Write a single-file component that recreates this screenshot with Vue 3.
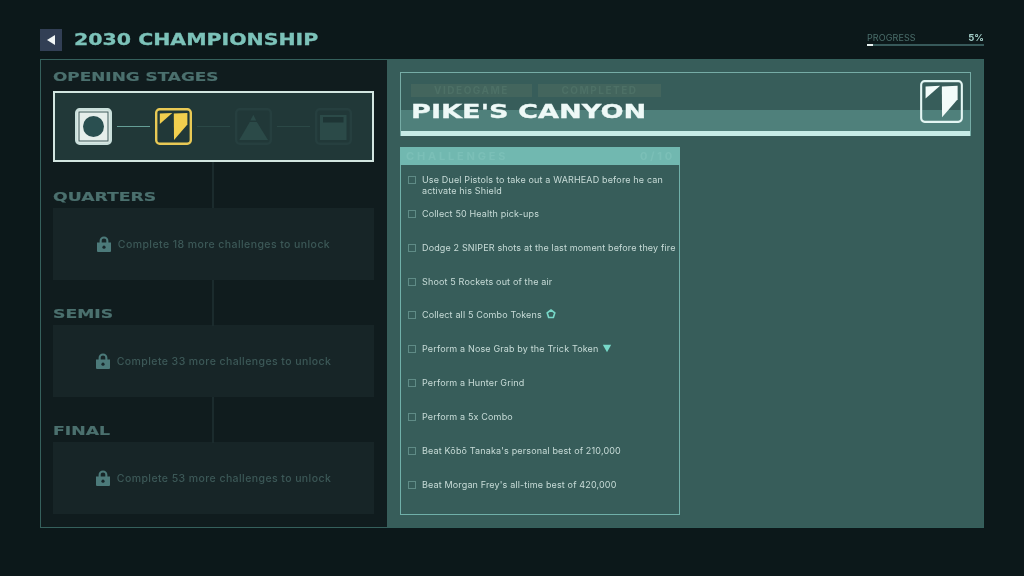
<template>
  <div class="screen">
    <header class="top-bar">
      <button class="back-btn"><span class="back-arrow"></span></button>
      <h1 class="page-title"><span>2030 CHAMPIONSHIP</span></h1>
      <div class="progress">
        <div class="progress-labels">
          <span class="progress-label">PROGRESS</span>
          <span class="progress-value">5%</span>
        </div>
        <div class="progress-track"><div class="progress-fill" :style="{ width: progress + '%' }"></div></div>
      </div>
    </header>

    <main class="frame">
      <section class="left-panel">
        <h2 class="stage-title first"><span>OPENING STAGES</span></h2>
        <div class="stage-box">
          <svg class="stage-icon" viewBox="0 0 37 37">
            <rect x="1.2" y="1.2" width="34.6" height="34.6" rx="3.5" fill="#e6eeeb" stroke="#c9dfdb" stroke-width="2.4" />
            <rect x="4" y="4" width="29" height="29" fill="none" stroke="#3c5a5a" stroke-width="1" />
            <circle cx="18.5" cy="18.5" r="10.5" fill="#2a4f50" />
          </svg>
          <span class="link"></span>
          <svg class="stage-icon" viewBox="0 0 37 37">
            <rect x="1.2" y="1.2" width="34.6" height="34.6" rx="3.5" fill="#213838" stroke="#e9c955" stroke-width="2.4" />
            <polygon :points="glyphLeft" fill="#f2cf4e" />
            <polygon :points="glyphRight" fill="#f2cf4e" />
          </svg>
          <span class="link dim"></span>
          <svg class="stage-icon" viewBox="0 0 37 37">
            <rect x="1.2" y="1.2" width="34.6" height="34.6" rx="3.5" fill="none" stroke="#263f3f" stroke-width="2.4" />
            <polygon points="18.3,6.7 21.2,12.5 15.4,12.5" fill="#2b4a48" />
            <polygon points="14.8,14 21.8,14 33,32 4.3,32" fill="#2b4a48" />
          </svg>
          <span class="link dim"></span>
          <svg class="stage-icon" viewBox="0 0 37 37">
            <rect x="1.2" y="1.2" width="34.6" height="34.6" rx="3.5" fill="none" stroke="#263f3f" stroke-width="2.4" />
            <rect x="5" y="7" width="26.5" height="25" fill="#2b4a48" />
            <rect x="8" y="9" width="20.5" height="5.5" fill="#1e3535" />
          </svg>
        </div>

        <div v-for="stage in lockedStages" :key="stage.name" class="stage-group">
          <h2 class="stage-title"><span>{{ stage.name }}</span></h2>
          <div class="locked-box">
            <svg class="lock" viewBox="0 0 14 16">
              <path d="M2.6 7V4.8C2.6 2.2 4.5 .6 7 .6s4.4 1.6 4.4 4.2V7H9.3V4.8C9.3 3.4 8.4 2.6 7 2.6S4.7 3.4 4.7 4.8V7z" fill="#4c7a7a" />
              <path d="M0 6.6h14V15a1 1 0 0 1-1 1H1a1 1 0 0 1-1-1z" fill="#4c7a7a" />
              <circle cx="7" cy="11.2" r="1.6" fill="#17262a" />
            </svg>
            <span class="locked-text">Complete {{ stage.more }} more challenges to unlock</span>
          </div>
        </div>
      </section>

      <section class="right-panel">
        <div class="hero">
          <div class="hero-tags">
            <span class="hero-tag wide">VIDEOGAME</span>
            <span class="hero-tag">COMPLETED</span>
          </div>
          <h2 class="hero-title"><span>PIKE'S CANYON</span></h2>
          <div class="hero-band"></div>
          <div class="hero-bar"></div>
          <svg class="hero-icon" viewBox="0 0 37 37">
            <rect x="1" y="1" width="35" height="35" rx="3" fill="none" stroke="#e4f6f3" stroke-width="1.8" />
            <polygon :points="glyphLeft" fill="#f2fbf9" />
            <polygon :points="glyphRight" fill="#f2fbf9" />
          </svg>
        </div>

        <div class="challenges">
          <div class="challenges-head">
            <span class="challenges-title">CHALLENGES</span>
            <span class="challenges-count">0/10</span>
          </div>
          <ul class="challenge-list">
            <li v-for="item in challenges" :key="item.text" class="challenge">
              <span class="check"></span>
              <span class="challenge-text">
                {{ item.text }}
                <svg v-if="item.token === 'combo'" class="token" viewBox="0 0 12 12">
                  <path d="M6 1.2l4.6 3.4-1.8 5.6H3.2L1.4 4.6z" fill="none" stroke="#77d8c8" stroke-width="2" stroke-linejoin="round" />
                </svg>
                <svg v-if="item.token === 'trick'" class="token" viewBox="0 0 12 12">
                  <polygon points="1,2 11,2 6,11" fill="#77d8c8" />
                </svg>
              </span>
            </li>
          </ul>
        </div>
      </section>
    </main>
  </div>
</template>

<script setup>
const progress = 5

const glyphLeft = '4.8,5.6 17.3,4.9 4.8,15.9'
const glyphRight = '18.8,5.6 32.4,4.9 32.4,16.5 19,32'

const lockedStages = [
  { name: 'QUARTERS', more: 18 },
  { name: 'SEMIS', more: 33 },
  { name: 'FINAL', more: 53 }
]

const challenges = [
  { text: 'Use Duel Pistols to take out a WARHEAD before he can activate his Shield' },
  { text: 'Collect 50 Health pick-ups' },
  { text: 'Dodge 2 SNIPER shots at the last moment before they fire' },
  { text: 'Shoot 5 Rockets out of the air' },
  { text: 'Collect all 5 Combo Tokens', token: 'combo' },
  { text: 'Perform a Nose Grab by the Trick Token', token: 'trick' },
  { text: 'Perform a Hunter Grind' },
  { text: 'Perform a 5x Combo' },
  { text: 'Beat Kōbō Tanaka\'s personal best of 210,000' },
  { text: 'Beat Morgan Frey\'s all-time best of 420,000' }
]
</script>

<style>
html, body {
  margin: 0;
  background: #0c181a;
}
</style>

<style scoped>
.screen {
  width: 1024px;
  height: 576px;
  box-sizing: border-box;
  padding: 29px 40px 0;
  background: #0c181a;
  font-family: "Inter", "Liberation Sans", sans-serif;
  overflow: hidden;
  filter: blur(0.4px);
}

.top-bar {
  display: flex;
  align-items: flex-start;
  height: 30px;
}

.back-btn {
  width: 22px;
  height: 22px;
  padding: 0;
  border: 0;
  background: #323f55;
  display: flex;
  align-items: center;
  justify-content: center;
}

.back-arrow {
  width: 0;
  height: 0;
  border-top: 5px solid transparent;
  border-bottom: 5px solid transparent;
  border-right: 8px solid #f2f6f6;
}

.page-title {
  margin: 0 0 0 12px;
  font: bold 16px/22px "DejaVu Sans", sans-serif;
  color: #7cc2b9;
  -webkit-text-stroke: 0.3px #7cc2b9;
  flex: 1;
}

.page-title span,
.stage-title span,
.hero-title span {
  display: inline-block;
  transform-origin: left center;
  white-space: nowrap;
}

.page-title span {
  transform: scaleX(1.28);
}

.progress {
  width: 117px;
  margin-top: 2px;
}

.progress-labels {
  display: flex;
  justify-content: space-between;
  align-items: center;
  height: 13px;
}

.progress-label {
  font-size: 9px;
  letter-spacing: 0.1px;
  color: #4b6e6b;
}

.progress-value {
  font-size: 9.5px;
  font-weight: 700;
  color: #a5cfca;
}

.progress-track {
  height: 2px;
  background: #37595a;
}

.progress-fill {
  height: 100%;
  background: #e8f2f0;
}

.frame {
  display: flex;
  width: 944px;
  height: 469px;
  box-sizing: border-box;
  border: 1px solid #35605c;
}

.left-panel {
  width: 346px;
  box-sizing: border-box;
  padding: 0 13px 0 12px;
  background: #101c1e;
}

.stage-title {
  margin: 0;
  font: bold 12.5px/14px "DejaVu Sans", sans-serif;
  color: #4b706e;
  -webkit-text-stroke: 0.2px #4b706e;
  height: 46px;
  box-sizing: border-box;
  padding-top: 27.5px;
}

.stage-title span {
  transform: scaleX(1.38);
}

.stage-title.first {
  height: 31px;
  padding-top: 10px;
}

.stage-title.first span {
  transform: scaleX(1.35);
}

.stage-box {
  display: flex;
  align-items: center;
  height: 71px;
  box-sizing: border-box;
  padding: 0 20px;
  border: 2px solid #d3e6e1;
  background: #213838;
}

.stage-icon {
  width: 37px;
  height: 37px;
  flex: none;
}

.link {
  flex: 1;
  height: 1px;
  margin: 0 5px;
  background: #659e96;
}

.link.dim {
  background: #2b4846;
}

.stage-group {
  position: relative;
}

/* connector running down from the box above */
.stage-group::before {
  content: "";
  position: absolute;
  left: 159px;
  top: 0;
  width: 2px;
  height: 46px;
  background: #1b2b2d;
}

.stage-group:nth-of-type(n + 3) .stage-title {
  height: 45px;
  padding-top: 26.5px;
}

.locked-box {
  display: flex;
  align-items: center;
  justify-content: center;
  gap: 7px;
  height: 72px;
  background: #172527;
}

.lock {
  width: 14px;
  height: 16px;
}

.locked-text {
  font-size: 10.5px;
  font-weight: 500;
  letter-spacing: 0.42px;
  color: #3c5857;
}

.right-panel {
  flex: 1;
  box-sizing: border-box;
  padding: 12px 12px 0 13px;
  background: #375d5a;
}

.hero {
  position: relative;
  height: 64px;
  box-sizing: border-box;
  border: 1px solid #76aca6;
  border-bottom: 0;
  display: flex;
  flex-direction: column;
}

.hero-tags {
  display: flex;
  gap: 6px;
  margin: 11px 0 0 10px;
  height: 13px;
}

.hero-tag {
  width: 123px;
  height: 13px;
  line-height: 13px;
  text-align: center;
  font-size: 10px;
  font-weight: 700;
  letter-spacing: 1.5px;
  color: #4d7066;
  background: #43655d;
}

.hero-tag.wide {
  width: 121px;
}

.hero-title {
  position: absolute;
  left: 10px;
  top: 26px;
  margin: 0;
  font: bold 19px/24px "DejaVu Sans", sans-serif;
  color: #eef9f7;
  -webkit-text-stroke: 0.3px #eef9f7;
  z-index: 1;
}

.hero-title span {
  transform: scaleX(1.43);
}

.hero-band {
  margin-top: 13px;
  flex: 1;
  background: #4f807b;
}

.hero-bar {
  height: 5px;
  background: #c6ece7;
}

.hero-icon {
  position: absolute;
  right: 7px;
  top: 7px;
  width: 43px;
  height: 43px;
}

.challenges {
  width: 280px;
  height: 368px;
  margin-top: 11px;
  box-sizing: border-box;
  border: 1px solid #70b0a9;
  border-top: 0;
}

.challenges-head {
  display: flex;
  justify-content: space-between;
  align-items: center;
  height: 18px;
  margin: 0 -1px;
  padding: 0 5px 0 6px;
  background: #71b8b0;
  font-size: 11px;
  font-weight: 700;
  letter-spacing: 2.8px;
  color: #7bbfb7;
}

.challenge-list {
  list-style: none;
  margin: 9px 0 0;
  padding: 0 3px 0 7px;
}

.challenge {
  display: flex;
  gap: 6px;
  min-height: 33.85px;
  font-size: 9px;
  line-height: 11px;
  letter-spacing: 0.15px;
  color: #c8dcd8;
}

.check {
  width: 8px;
  height: 8px;
  flex: none;
  margin-top: 2px;
  box-sizing: border-box;
  border: 1px solid #5f8b86;
}

.challenge-text {
  flex: 1;
}

.token {
  width: 10px;
  height: 10px;
  vertical-align: -1px;
  margin-left: 1px;
}
</style>
